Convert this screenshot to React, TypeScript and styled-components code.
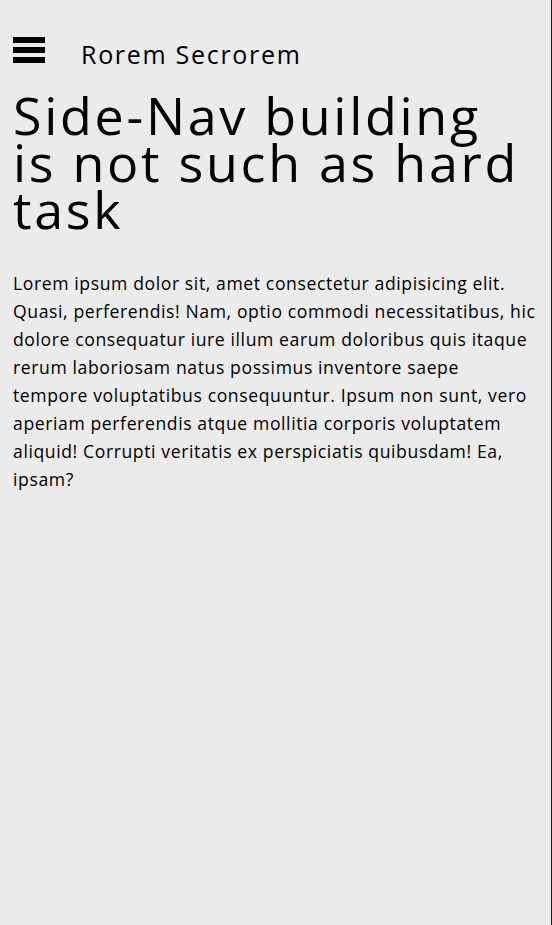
import React from "react";
import styled, { createGlobalStyle } from "styled-components";

const GlobalStyle = createGlobalStyle`
  html, body {
    margin: 0;
    padding: 0;
    background: #ebebeb;
  }
  body {
    font-family: "Open Sans", "Noto Sans", sans-serif;
    color: #000;
    min-height: 100vh;
  }
  * { box-sizing: border-box; }
`;

const Page = styled.div`
  padding: 0 16px 0 13px;
`;

const Header = styled.header`
  display: flex;
  align-items: flex-start;
  gap: 36px;
  padding-top: 37px;
  height: 63px;
`;

const MenuButton = styled.button`
  display: flex;
  flex-direction: column;
  gap: 4px;
  width: 32px;
  padding: 0;
  border: none;
  background: transparent;
  cursor: pointer;
`;

const Bar = styled.span`
  display: block;
  width: 32px;
  height: 6px;
  background: #000;
`;

const Brand = styled.h2`
  margin: 0;
  font-size: 25px;
  font-weight: 400;
  line-height: 1;
  letter-spacing: 1.7px;
  padding-top: 5px;
`;

const Title = styled.h1`
  margin: 28px 0 0;
  font-size: 52px;
  font-weight: 400;
  line-height: 47px;
  letter-spacing: 2.7px;
`;

const Text = styled.p`
  margin: 37px 0 0;
  font-size: 17.6px;
  line-height: 28px;
  letter-spacing: 0.6px;
`;

const SideNav = styled.nav`
  position: fixed;
  top: 0;
  right: 0;
  width: 0;
  height: 100vh;
  border-left: 1px solid #1c1c1c;
  overflow: hidden;
`;

export default function App() {
  return (
    <>
      <GlobalStyle />
      <SideNav />
      <Page>
        <Header>
          <MenuButton aria-label="menu">
            <Bar />
            <Bar />
            <Bar />
          </MenuButton>
          <Brand>Rorem Secrorem</Brand>
        </Header>
        <Title>Side-Nav building is not such as hard task</Title>
        <Text>
          Lorem ipsum dolor sit, amet consectetur adipisicing elit. Quasi,
          perferendis! Nam, optio commodi necessitatibus, hic dolore consequatur
          iure illum earum doloribus quis itaque rerum laboriosam natus possimus
          inventore saepe tempore voluptatibus consequuntur. Ipsum non sunt, vero
          aperiam perferendis atque mollitia corporis voluptatem aliquid!
          Corrupti veritatis ex perspiciatis quibusdam! Ea, ipsam?
        </Text>
      </Page>
    </>
  );
}
